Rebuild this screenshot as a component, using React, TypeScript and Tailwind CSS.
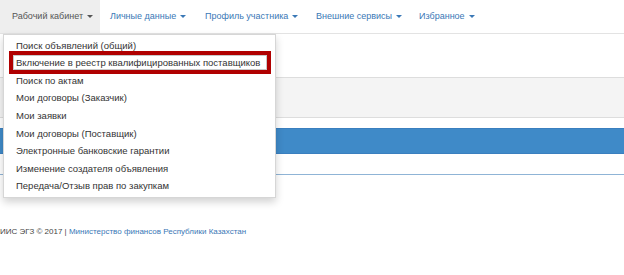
import React from "react";

const navItems = [
  { label: "Рабочий кабинет", active: true, w: "w-[100px]" },
  { label: "Личные данные", w: "w-[95px]" },
  { label: "Профиль участника", w: "w-[111px]" },
  { label: "Внешние сервисы", w: "w-[103px]" },
  { label: "Избранное", w: "w-[80px]" },
];

const menuItems = [
  "Поиск объявлений (общий)",
  "Включение в реестр квалифицированных поставщиков",
  "Поиск по актам",
  "Мои договоры (Заказчик)",
  "Мои заявки",
  "Мои договоры (Поставщик)",
  "Электронные банковские гарантии",
  "Изменение создателя объявления",
  "Передача/Отзыв прав по закупкам",
];

function Caret() {
  return (
    <span className="ml-[4px] inline-block h-0 w-0 border-x-[3px] border-t-[3px] border-x-transparent border-t-current align-middle" />
  );
}

export default function App() {
  return (
    <div className="relative h-[275px] w-[624px] overflow-hidden bg-white font-['Liberation_Sans',Arial,sans-serif]">
      {/* Top navbar */}
      <nav className="flex h-[34px] border-b border-[#e3e3e3]">
        {navItems.map((item) => (
          <div
            key={item.label}
            className={`flex items-center whitespace-nowrap pl-[10px] text-[9px] ${item.w} ${
              item.active
                ? "bg-[#eeeeee] pl-[12px] text-[#555]"
                : "text-[#3a78b6]"
            }`}
          >
            {item.label}
            <Caret />
          </div>
        ))}
      </nav>

      {/* Page content behind the menu */}
      <div className="h-[43px]" />
      <div className="h-[41px] border-y border-[#dddddd] bg-[#f4f4f4]" />
      <div className="h-[10px]" />
      <div className="h-[26px] border-y border-[#3a7fbf] bg-[#3f8ac8]" />
      <div className="h-[21px] border-b border-[#8fb4d6]" />

      <footer className="mt-[51px] whitespace-nowrap text-[8px] text-[#444]">
        ИИС ЭГЗ © 2017 |{" "}
        <span className="text-[#3a78b6]">Министерство финансов Республики Казахстан</span>
      </footer>

      {/* Dropdown menu */}
      <div className="absolute left-[3px] top-[34px] w-[273px] border border-[#d6d6d6] bg-white py-[2px] shadow-[0_4px_8px_rgba(0,0,0,0.18)]">
        {menuItems.map((m) => (
          <div
            key={m}
            className="flex h-[17.6px] items-center whitespace-nowrap pl-[12px] text-[9.5px] text-[#333]"
          >
            {m}
          </div>
        ))}
      </div>

      {/* Highlight annotation */}
      <div className="absolute left-[9px] top-[51px] h-[23px] w-[262px] border-[4px] border-[#b00000]">
        <div className="h-full w-full border border-[#c8c8c8]" />
      </div>
    </div>
  );
}
